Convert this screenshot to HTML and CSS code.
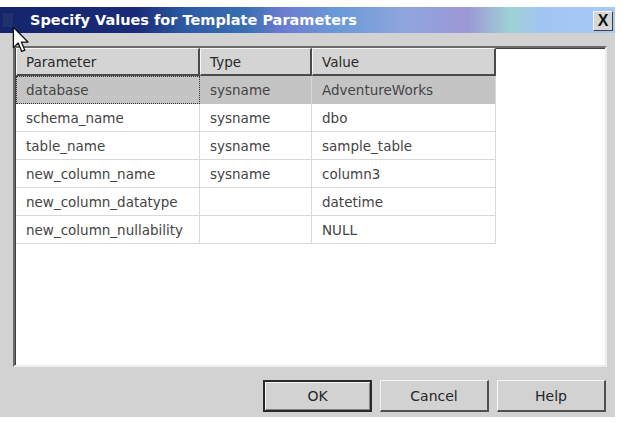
FILE: index.html
```html
<!DOCTYPE html>
<html>
<head>
<meta charset="utf-8">
<link rel="stylesheet" href="styles.css">
</head>
<body>
<div class="dialog">
  <div class="titlebar">
    <span class="appicon"></span>
    <span class="title">Specify Values for Template Parameters</span>
    <span class="close">X</span>
  </div>
  <div class="content">
    <div class="listbox">
      <div class="grid">
        <div class="hcell">Parameter</div>
        <div class="hcell">Type</div>
        <div class="hcell">Value</div>

        <div class="cell sel focus">database</div>
        <div class="cell sel">sysname</div>
        <div class="cell sel">AdventureWorks</div>

        <div class="cell">schema_name</div>
        <div class="cell">sysname</div>
        <div class="cell">dbo</div>

        <div class="cell">table_name</div>
        <div class="cell">sysname</div>
        <div class="cell">sample_table</div>

        <div class="cell">new_column_name</div>
        <div class="cell">sysname</div>
        <div class="cell">column3</div>

        <div class="cell">new_column_datatype</div>
        <div class="cell"></div>
        <div class="cell">datetime</div>

        <div class="cell">new_column_nullability</div>
        <div class="cell"></div>
        <div class="cell">NULL</div>
      </div>
    </div>
    <div class="buttons">
      <div class="btn default">OK</div>
      <div class="btn">Cancel</div>
      <div class="btn">Help</div>
    </div>
  </div>
  <svg class="cursor" width="18" height="28" viewBox="0 0 14 22">
    <path d="M1 1 L1 17 L4.8 13.4 L7.6 20 L10 19 L7.3 12.6 L12.5 12.6 Z" fill="#fff" stroke="#111" stroke-width="1" stroke-linejoin="round"/>
  </svg>
</div>
</body>
</html>
```

FILE: styles.css
```css
html, body {
  margin: 0;
  padding: 0;
  background: #ffffff;
}

body {
  width: 630px;
  height: 423px;
  overflow: hidden;
  font-family: "DejaVu Sans", Verdana, sans-serif;
}

.dialog {
  position: relative;
  margin-top: 7px;
  width: 615px;
  height: 410px;
  background: #d2d2d2;
  display: flex;
  flex-direction: column;
}

.titlebar {
  height: 26px;
  display: flex;
  align-items: center;
  background: linear-gradient(90deg,
    #14256c 0%, #1a2a78 22%, #2c5aa2 30%, #3a6fb2 40%,
    #6c7cd0 46%, #6a9ad8 55%, #8fa6dc 66%, #9c98d6 76%,
    #9ed2d4 83%, #a2c4f2 88%, #a6caf4 100%);
  padding: 0 2px 0 3px;
}

.appicon {
  width: 10px;
  height: 14px;
  background: #2a3a70;
  margin-right: 17px;
  opacity: 0.6;
}

.title {
  flex: 1;
  color: #ffffff;
  font-weight: bold;
  font-size: 14.5px;
}

.close {
  width: 20px;
  height: 20px;
  box-sizing: border-box;
  background: #d6d6d6;
  border-top: 1px solid #f4f4f4;
  border-left: 1px solid #f4f4f4;
  border-right: 1px solid #404040;
  border-bottom: 1px solid #404040;
  display: flex;
  align-items: center;
  justify-content: center;
  font-family: "Liberation Sans", Arial, sans-serif;
  font-size: 16px;
  font-weight: bold;
  color: #111;
  margin-top: 1px;
}

.content {
  flex: 1;
  padding: 13px 8px 5px 13px;
  display: flex;
  flex-direction: column;
}

.listbox {
  height: 321px;
  box-sizing: border-box;
  background: #ffffff;
  border-top: 2px solid #6a6a6a;
  border-left: 2px solid #6a6a6a;
  border-right: 2px solid #ececec;
  border-bottom: 2px solid #ececec;
  box-shadow: inset 1px 1px 0 #404040;
}

.grid {
  display: grid;
  grid-template-columns: 184px 112px 184px;
  grid-template-rows: 28px repeat(6, 28px);
  width: 480px;
  margin-left: 1px;
}

.hcell {
  box-sizing: border-box;
  background: #d4d4d4;
  border-top: 1px solid #f8f8f8;
  border-left: 1px solid #f8f8f8;
  border-right: 2px solid #4a4a4a;
  border-bottom: 2px solid #4a4a4a;
  font-size: 13.5px;
  color: #2a2a2a;
  padding-left: 9px;
  display: flex;
  align-items: center;
}

.cell {
  box-sizing: border-box;
  border-right: 1px solid #d8d8d8;
  border-bottom: 1px solid #d8d8d8;
  font-size: 13.5px;
  color: #444444;
  padding-left: 10px;
  display: flex;
  align-items: center;
}

.cell.sel {
  background: #c4c4c4;
  border-bottom-color: #c4c4c4;
}

.cell.focus {
  border: 1px dotted #333;
  padding-left: 9px;
}

.buttons {
  margin-top: 13px;
  display: flex;
  justify-content: flex-end;
  gap: 8px;
  padding-right: 1px;
}

.btn {
  width: 109px;
  height: 32px;
  box-sizing: border-box;
  background: #d2d2d2;
  border-top: 1px solid #f4f4f4;
  border-left: 1px solid #f4f4f4;
  border-right: 2px solid #505050;
  border-bottom: 2px solid #505050;
  display: flex;
  align-items: center;
  justify-content: center;
  font-size: 14px;
  color: #262626;
}

.btn.default {
  border: 2px solid #2a2a2a;
  box-shadow: inset 1px 1px 0 #f4f4f4, inset -1px -1px 0 #808080;
}

.cursor {
  position: absolute;
  left: 12px;
  top: 19px;
}
```
